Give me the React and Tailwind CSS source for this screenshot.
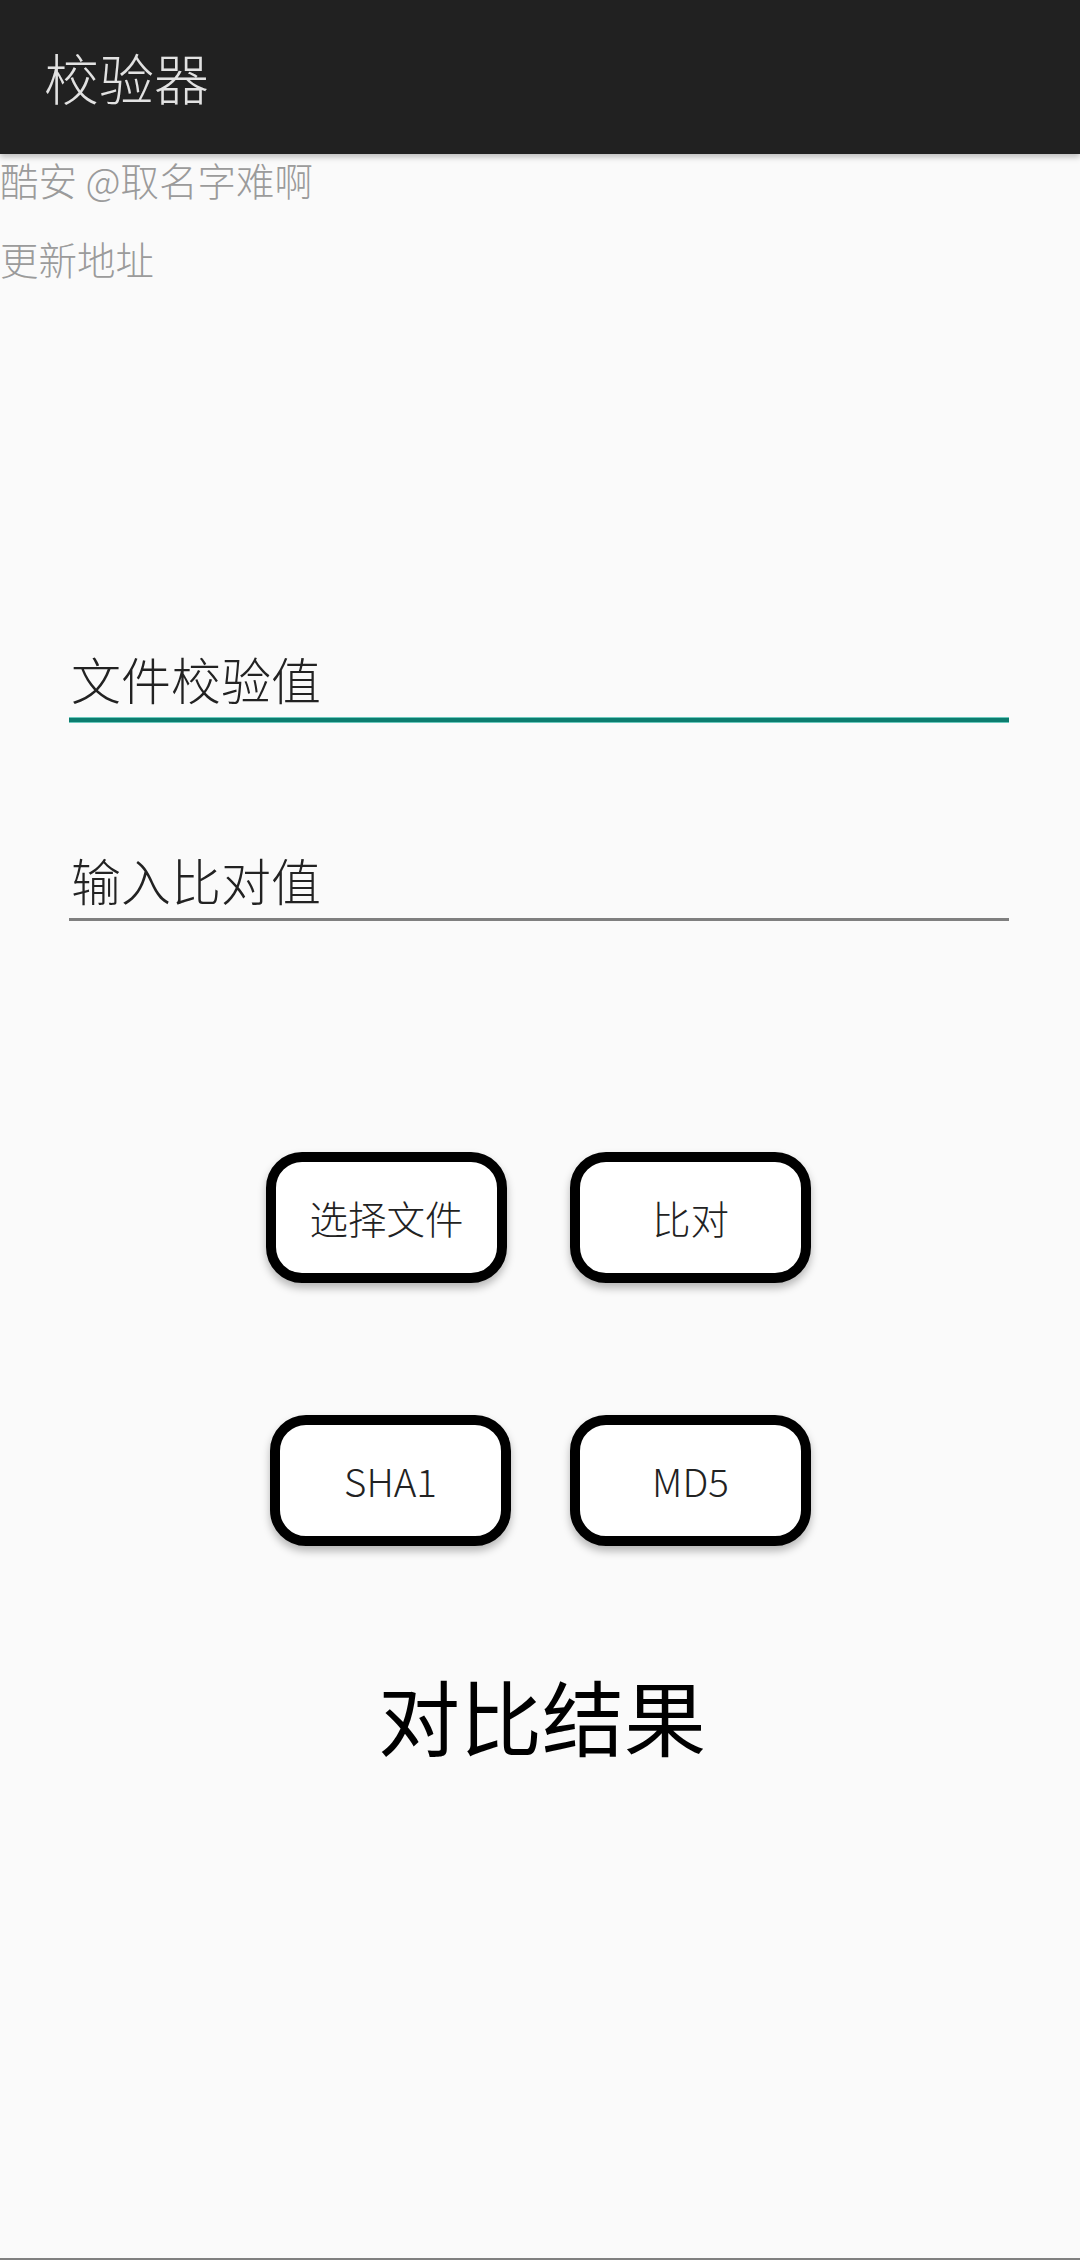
const font = { fontFamily: '"Noto Sans CJK SC", "Noto Sans", Roboto, sans-serif' };

const OutlineButton = ({ label }) => (
  <button className="w-[241px] h-[131px] rounded-[36px] border-[10px] border-black bg-white shadow-[0_5px_8px_rgba(0,0,0,0.28)] flex items-center justify-center text-[38.5px] leading-none font-light text-[#222222]">
    {label}
  </button>
);

const App = () => {
  return (
    <div className="min-h-[2260px] h-[2260px] bg-[#fafafa] flex flex-col overflow-hidden" style={font}>
      {/* Toolbar */}
      <div className="h-[154px] shrink-0 bg-[#212121] flex items-center pl-[44px] shadow-[0_3px_6px_rgba(0,0,0,0.25)] relative z-10">
        <h1 className="text-[55px] leading-none font-light text-[#e2e2e2] -mt-[2px]">校验器</h1>
      </div>

      {/* Links */}
      <p className="text-[38.5px] leading-[50px] font-light text-[#9b9b9b]">酷安 @取名字难啊</p>
      <p className="mt-[29px] text-[38.5px] leading-[50px] font-light text-[#9b9b9b]">更新地址</p>

      {/* Inputs */}
      <div className="mt-[362px] mx-[69px] w-[940px]">
        <div className="text-[50px] leading-[66px] pb-[6px] font-light text-[#222222] pl-[2px]">文件校验值</div>
        <div className="h-[6px] bg-[#0c7d6f] border-y border-[#6cc9bd]" />
      </div>
      <div className="mt-[123px] mx-[69px] w-[940px]">
        <div className="text-[50px] leading-[66px] pb-[6px] font-light text-[#222222] pl-[2px]">输入比对值</div>
        <div className="h-[3px] bg-[#7f7f7f]" />
      </div>

      {/* Buttons */}
      <div className="mt-[231px] flex pl-[266px] gap-[63px]">
        <OutlineButton label="选择文件" />
        <OutlineButton label="比对" />
      </div>
      <div className="mt-[132px] flex pl-[270px] gap-[59px]">
        <OutlineButton label="SHA1" />
        <OutlineButton label="MD5" />
      </div>

      {/* Result */}
      <div className="mt-[109px] text-center text-[82px] leading-[119px] text-black pl-[4px]">对比结果</div>

      <div className="flex-1" />
      <div className="h-[2px] bg-[#808080]" />
    </div>
  );
};

export default App;
